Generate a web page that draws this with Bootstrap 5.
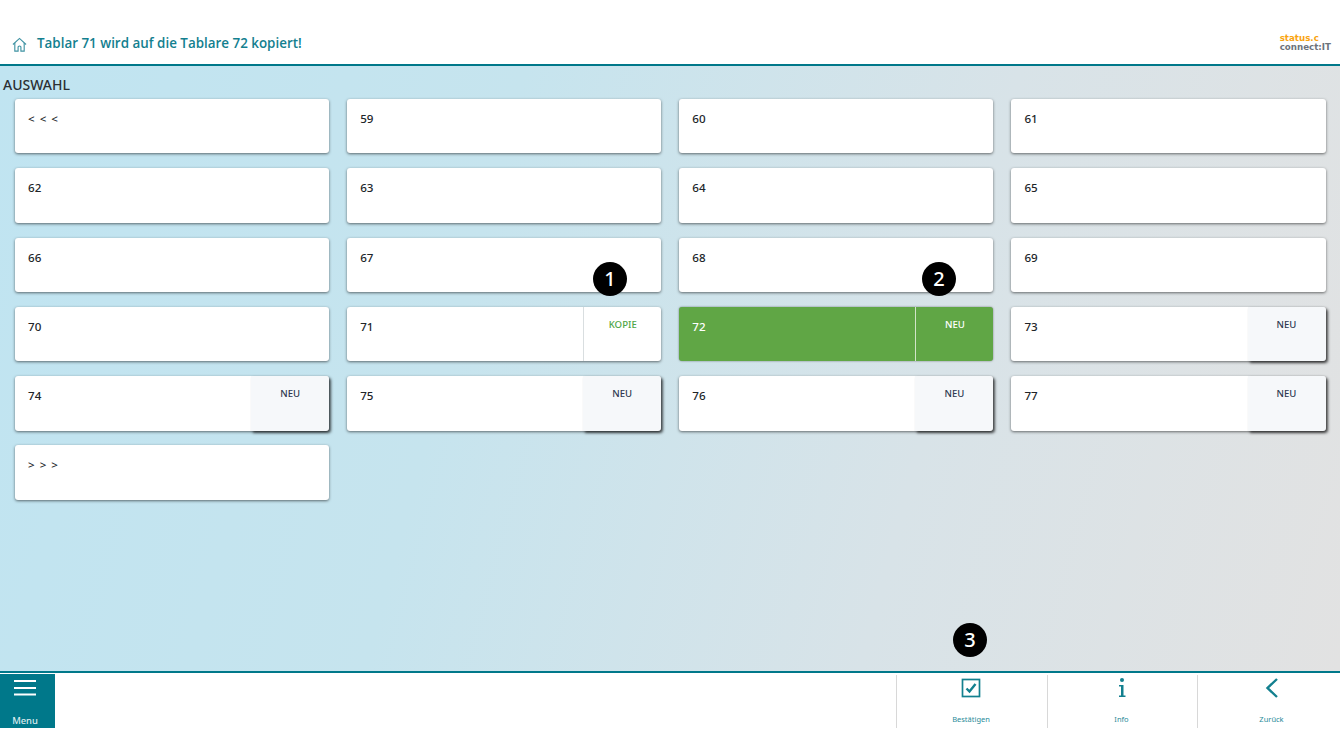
<!DOCTYPE html>
<html lang="de">
<head>
<meta charset="UTF-8" />
<title>Tablar kopieren</title>
<link href="https://cdn.jsdelivr.net/npm/bootstrap@5.3.0/dist/css/bootstrap.min.css" rel="stylesheet" />
<script src="https://cdn.jsdelivr.net/npm/bootstrap@5.3.0/dist/js/bootstrap.bundle.min.js"></script>
<style>
html, body { height: 752px; overflow: hidden; }
body { font-family: "Noto Sans", "Open Sans", sans-serif; color: #212529; background: #fff; }
.app-head { height: 66px; border-bottom: 2px solid #00788a; padding: 0 9px 12px 12px; }
.app-title { font-family: "Open Sans", sans-serif; font-size: 13.4px; font-weight: 600; line-height: 18px; color: #13808f; margin: 0 0 0 10px; }
.home-ico { width: 15px; height: 15px; margin-top: 2px; }
.app-logo { font-family: "DejaVu Sans", sans-serif; font-size: 8.7px; line-height: 9px; font-weight: 700; }
.logo-a { color: #f9a40f; }
.logo-b { color: #6d737b; }
.app-main { height: 605px; background: linear-gradient(105deg, #c0e4f1 0%, #c6e4ee 35%, #d8e3e8 68%, #e2e2e2 100%); position: relative; padding: 9px 14.5px 0 15px; }
.sect-title { font-size: 14px; font-weight: 500; line-height: 19px; margin: 0 0 5px -12px; color: #2b2f33; }
.tile-grid { display: grid; grid-template-columns: repeat(4, 1fr); column-gap: 18px; row-gap: 14.9px; }
.tile { height: 54.4px; background: #fff; border-radius: 3px; box-shadow: 0 1px 3px rgba(0,0,0,.55); font-size: 11.6px; font-weight: 500; padding: 11px 13px; position: relative; display: flex; }
.tile-num { line-height: 18px; flex-grow: 1; }
.tile-arrows { word-spacing: 2px; }
.tile-side { width: 78px; margin: -11px -13px -11px 0; text-align: center; font-size: 9.6px; font-weight: 500; padding-top: 11px; line-height: 14px; border-radius: 0 3px 3px 0; }
.side-new { background: #f6f8fa; color: #2f3850; box-shadow: 2px 2px 3px rgba(0,0,0,.6); }
.side-copy { border-left: 1px solid #d9dee0; color: #4ea647; }
.tile-on { background: #60a645; color: #fff; box-shadow: 0 0 2px rgba(0,0,0,.5); }
.tile-on .tile-side { border-left: 1px solid #d2e4c8; color: #fff; }
.step-dot { position: absolute; width: 34px; height: 34px; border-radius: 50%; background: #000; color: #fff; font-size: 20px; font-weight: 500; line-height: 33px; text-align: center; z-index: 5; }
.step-1 { left: 593px; top: 196px; }
.step-2 { left: 922px; top: 196px; }
.step-3 { left: 953px; top: 557px; }
.app-foot { height: 57px; border-top: 2px solid #00788a; }
.menu-btn { width: 55px; height: 54px; margin-top: 1px; background: #00788a; color: #dcebee; font-size: 9.4px; font-weight: 500; padding-right: 5px; }
.menu-btn svg { width: 24px; height: 18px; margin-top: 5px; }
.menu-btn span { margin-top: 17px; line-height: 14px; }
.foot-btn { width: 150.5px; height: 53px; margin-top: 2px; border-left: 1px solid #d8d8d8; color: #2a8b99; font-size: 7.5px; padding: 2px 1.5px 0 0; }
.foot-btn svg { width: 22px; height: 22px; }
.foot-btn span { margin-top: 14px; line-height: 12px; }
.foot-last { width: 143px; padding: 2px 0 0 5px; }
</style>
</head>
<body>
<header class="app-head d-flex align-items-end justify-content-between">
    <div class="d-flex align-items-center">
        <svg class="home-ico" viewBox="0 0 16 16" fill="none" stroke="#3f93a3" stroke-width="1.2">
            <path d="M1 8 8 1.5 15 8" />
            <path d="M3 6.5V15H6.5V10.5Q8 8.8 9.5 10.5V15H13V6.5" />
        </svg>
        <h1 class="app-title">Tablar 71 wird auf die Tablare 72 kopiert!</h1>
    </div>
    <div class="app-logo">
        <div class="logo-a">status.c</div>
        <div class="logo-b">connect:IT</div>
    </div>
</header>

<main class="app-main">
    <div class="sect-title">AUSWAHL</div>
    <div class="tile-grid">
        <div class="tile"><span class="tile-num tile-arrows">&lt; &lt; &lt;</span></div>
        <div class="tile"><span class="tile-num">59</span></div>
        <div class="tile"><span class="tile-num">60</span></div>
        <div class="tile"><span class="tile-num">61</span></div>
        <div class="tile"><span class="tile-num">62</span></div>
        <div class="tile"><span class="tile-num">63</span></div>
        <div class="tile"><span class="tile-num">64</span></div>
        <div class="tile"><span class="tile-num">65</span></div>
        <div class="tile"><span class="tile-num">66</span></div>
        <div class="tile"><span class="tile-num">67</span></div>
        <div class="tile"><span class="tile-num">68</span></div>
        <div class="tile"><span class="tile-num">69</span></div>
        <div class="tile"><span class="tile-num">70</span></div>
        <div class="tile"><span class="tile-num">71</span><div class="tile-side side-copy">KOPIE</div></div>
        <div class="tile tile-on"><span class="tile-num">72</span><div class="tile-side">NEU</div></div>
        <div class="tile"><span class="tile-num">73</span><div class="tile-side side-new">NEU</div></div>
        <div class="tile"><span class="tile-num">74</span><div class="tile-side side-new">NEU</div></div>
        <div class="tile"><span class="tile-num">75</span><div class="tile-side side-new">NEU</div></div>
        <div class="tile"><span class="tile-num">76</span><div class="tile-side side-new">NEU</div></div>
        <div class="tile"><span class="tile-num">77</span><div class="tile-side side-new">NEU</div></div>
        <div class="tile"><span class="tile-num tile-arrows">&gt; &gt; &gt;</span></div>
    </div>
    <div class="step-dot step-1">1</div>
    <div class="step-dot step-2">2</div>
    <div class="step-dot step-3">3</div>
</main>

<footer class="app-foot d-flex justify-content-between">
    <div class="menu-btn d-flex flex-column align-items-center">
        <svg viewBox="0 0 24 18" stroke="#fff" stroke-width="2"><path d="M1 2H23M1 9H23M1 15.5H23" /></svg>
        <span>Menu</span>
    </div>
    <div class="d-flex">
        <div class="foot-btn d-flex flex-column align-items-center">
            <svg viewBox="0 0 22 22" fill="none" stroke="#13808f">
                <rect x="2.5" y="2.5" width="17" height="17" stroke-width="1.7" />
                <path d="M6.5 11.5 9.5 14.5 15.5 7" stroke-width="2.4" />
            </svg>
            <span>Bestätigen</span>
        </div>
        <div class="foot-btn d-flex flex-column align-items-center">
            <svg viewBox="0 0 22 22" fill="#13808f">
                <circle cx="11" cy="3" r="2" />
                <path d="M8 8H12.5V18.5H14.5V20H8V18.5H10V9.5H8Z" />
            </svg>
            <span>Info</span>
        </div>
        <div class="foot-btn foot-last d-flex flex-column align-items-center">
            <svg viewBox="0 0 22 22" fill="none" stroke="#13808f" stroke-width="2.4"><path d="M16 2 6.5 11 16 20" /></svg>
            <span>Zurück</span>
        </div>
    </div>
</footer>
</body>
</html>
